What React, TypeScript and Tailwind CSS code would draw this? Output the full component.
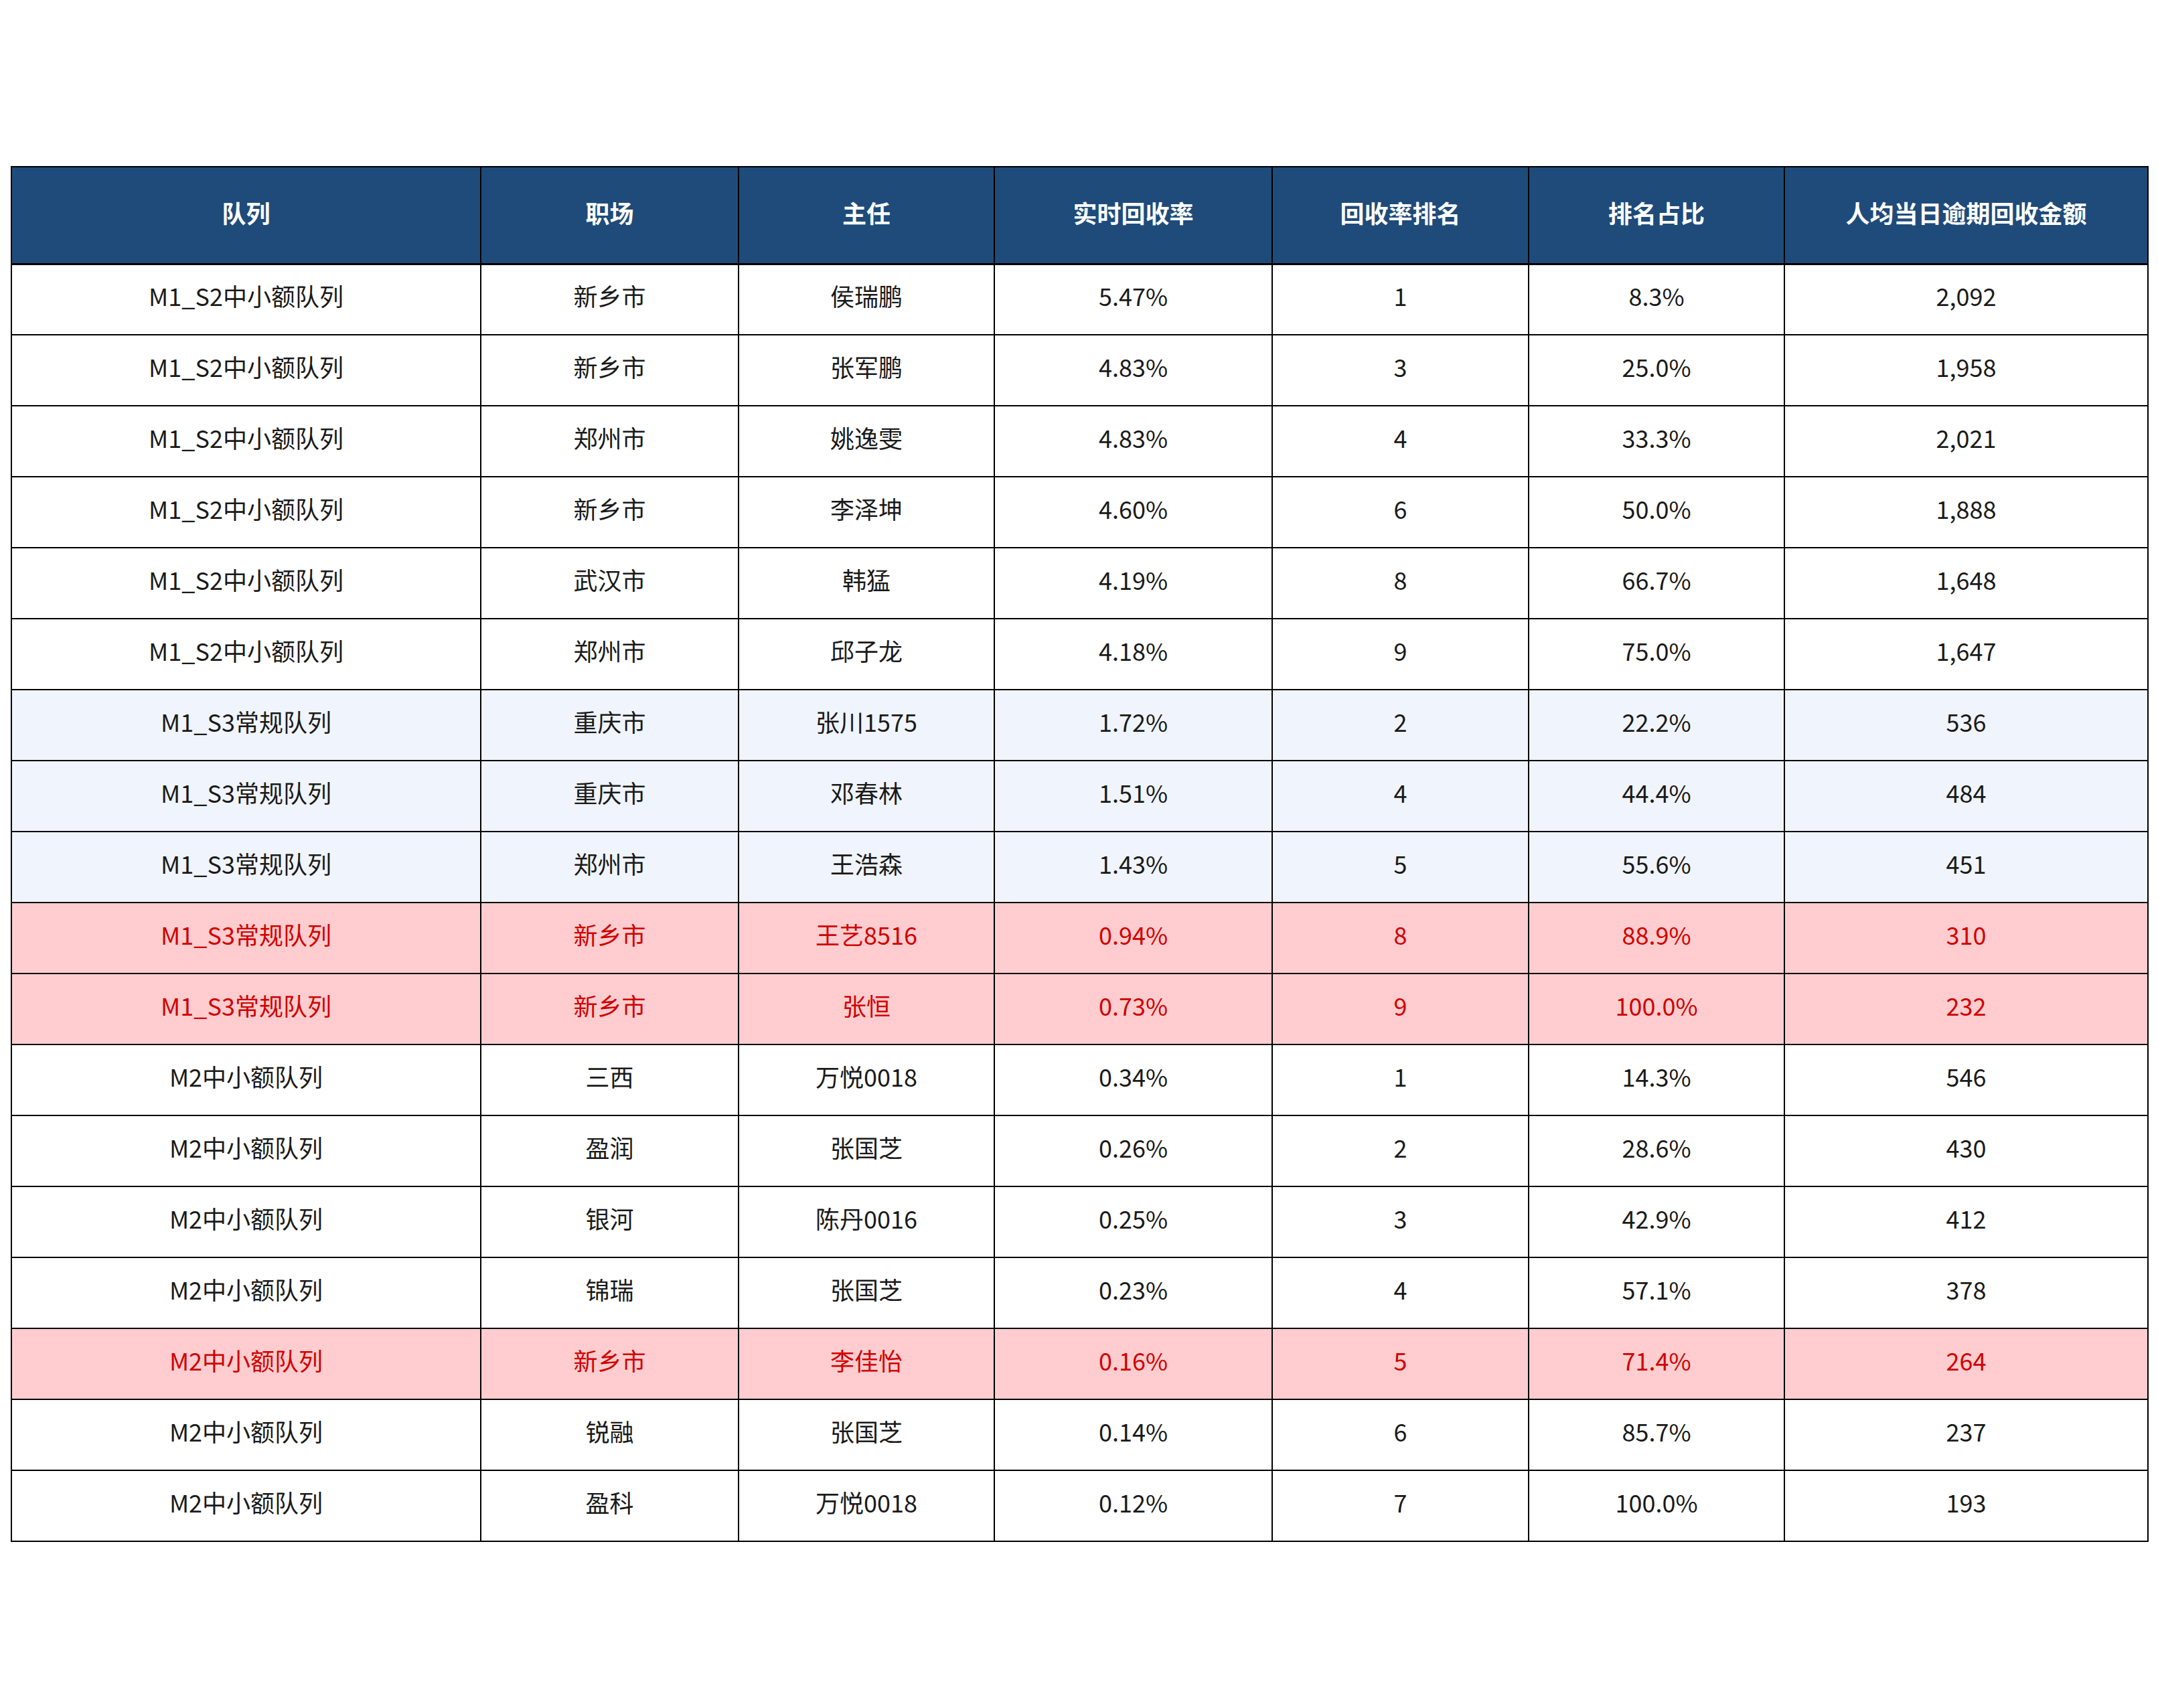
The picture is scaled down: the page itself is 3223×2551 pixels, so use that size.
import React from "react";

type Row = {
  queue: string;
  site: string;
  lead: string;
  rate: string;
  rank: number;
  ratio: string;
  amount: string;
  tone?: "blue" | "red";
};

const rows: Row[] = [
  { queue: "M1_S2中小额队列", site: "新乡市", lead: "侯瑞鹏", rate: "5.47%", rank: 1, ratio: "8.3%", amount: "2,092" },
  { queue: "M1_S2中小额队列", site: "新乡市", lead: "张军鹏", rate: "4.83%", rank: 3, ratio: "25.0%", amount: "1,958" },
  { queue: "M1_S2中小额队列", site: "郑州市", lead: "姚逸雯", rate: "4.83%", rank: 4, ratio: "33.3%", amount: "2,021" },
  { queue: "M1_S2中小额队列", site: "新乡市", lead: "李泽坤", rate: "4.60%", rank: 6, ratio: "50.0%", amount: "1,888" },
  { queue: "M1_S2中小额队列", site: "武汉市", lead: "韩猛", rate: "4.19%", rank: 8, ratio: "66.7%", amount: "1,648" },
  { queue: "M1_S2中小额队列", site: "郑州市", lead: "邱子龙", rate: "4.18%", rank: 9, ratio: "75.0%", amount: "1,647" },
  { queue: "M1_S3常规队列", site: "重庆市", lead: "张川1575", rate: "1.72%", rank: 2, ratio: "22.2%", amount: "536", tone: "blue" },
  { queue: "M1_S3常规队列", site: "重庆市", lead: "邓春林", rate: "1.51%", rank: 4, ratio: "44.4%", amount: "484", tone: "blue" },
  { queue: "M1_S3常规队列", site: "郑州市", lead: "王浩森", rate: "1.43%", rank: 5, ratio: "55.6%", amount: "451", tone: "blue" },
  { queue: "M1_S3常规队列", site: "新乡市", lead: "王艺8516", rate: "0.94%", rank: 8, ratio: "88.9%", amount: "310", tone: "red" },
  { queue: "M1_S3常规队列", site: "新乡市", lead: "张恒", rate: "0.73%", rank: 9, ratio: "100.0%", amount: "232", tone: "red" },
  { queue: "M2中小额队列", site: "三西", lead: "万悦0018", rate: "0.34%", rank: 1, ratio: "14.3%", amount: "546" },
  { queue: "M2中小额队列", site: "盈润", lead: "张国芝", rate: "0.26%", rank: 2, ratio: "28.6%", amount: "430" },
  { queue: "M2中小额队列", site: "银河", lead: "陈丹0016", rate: "0.25%", rank: 3, ratio: "42.9%", amount: "412" },
  { queue: "M2中小额队列", site: "锦瑞", lead: "张国芝", rate: "0.23%", rank: 4, ratio: "57.1%", amount: "378" },
  { queue: "M2中小额队列", site: "新乡市", lead: "李佳怡", rate: "0.16%", rank: 5, ratio: "71.4%", amount: "264", tone: "red" },
  { queue: "M2中小额队列", site: "锐融", lead: "张国芝", rate: "0.14%", rank: 6, ratio: "85.7%", amount: "237" },
  { queue: "M2中小额队列", site: "盈科", lead: "万悦0018", rate: "0.12%", rank: 7, ratio: "100.0%", amount: "193" },
];

const headers = ["队列", "职场", "主任", "实时回收率", "回收率排名", "排名占比", "人均当日逾期回收金额"];
const widths = [701, 385, 382, 415, 383, 382, 543];

export default function App() {
  return (
    <div
      className="min-h-[2551px] w-[3223px] bg-white px-[16px] pt-[248px]"
      style={{ fontFamily: '"Noto Sans CJK SC", "Noto Sans", sans-serif' }}
    >
      <table className="w-[3191px] table-fixed border-collapse border-2 border-black text-center">
        <colgroup>
          {widths.map((w, i) => (
            <col key={i} style={{ width: w }} />
          ))}
        </colgroup>
        <thead>
          <tr className="h-[145px] bg-[#1f4b7a]">
            {headers.map((h) => (
              <th
                key={h}
                className="border-2 border-b-[3px] border-black pb-[8px] text-[36px] font-bold text-white"
              >
                {h}
              </th>
            ))}
          </tr>
        </thead>
        <tbody>
          {rows.map((r, i) => {
            const rowCls =
              r.tone === "red"
                ? "bg-[#ffcdcf] text-[#d00000]"
                : r.tone === "blue"
                ? "bg-[#f0f4fc] text-[#1a1a1a]"
                : "bg-white text-[#1a1a1a]";
            return (
              <tr key={i} className={`h-[106px] ${rowCls}`}>
                {[r.queue, r.site, r.lead, r.rate, String(r.rank), r.ratio, r.amount].map((v, j) => (
                  <td key={j} className="border-2 border-black pb-[12px] text-[36px] leading-none">
                    {v}
                  </td>
                ))}
              </tr>
            );
          })}
        </tbody>
      </table>
    </div>
  );
}
